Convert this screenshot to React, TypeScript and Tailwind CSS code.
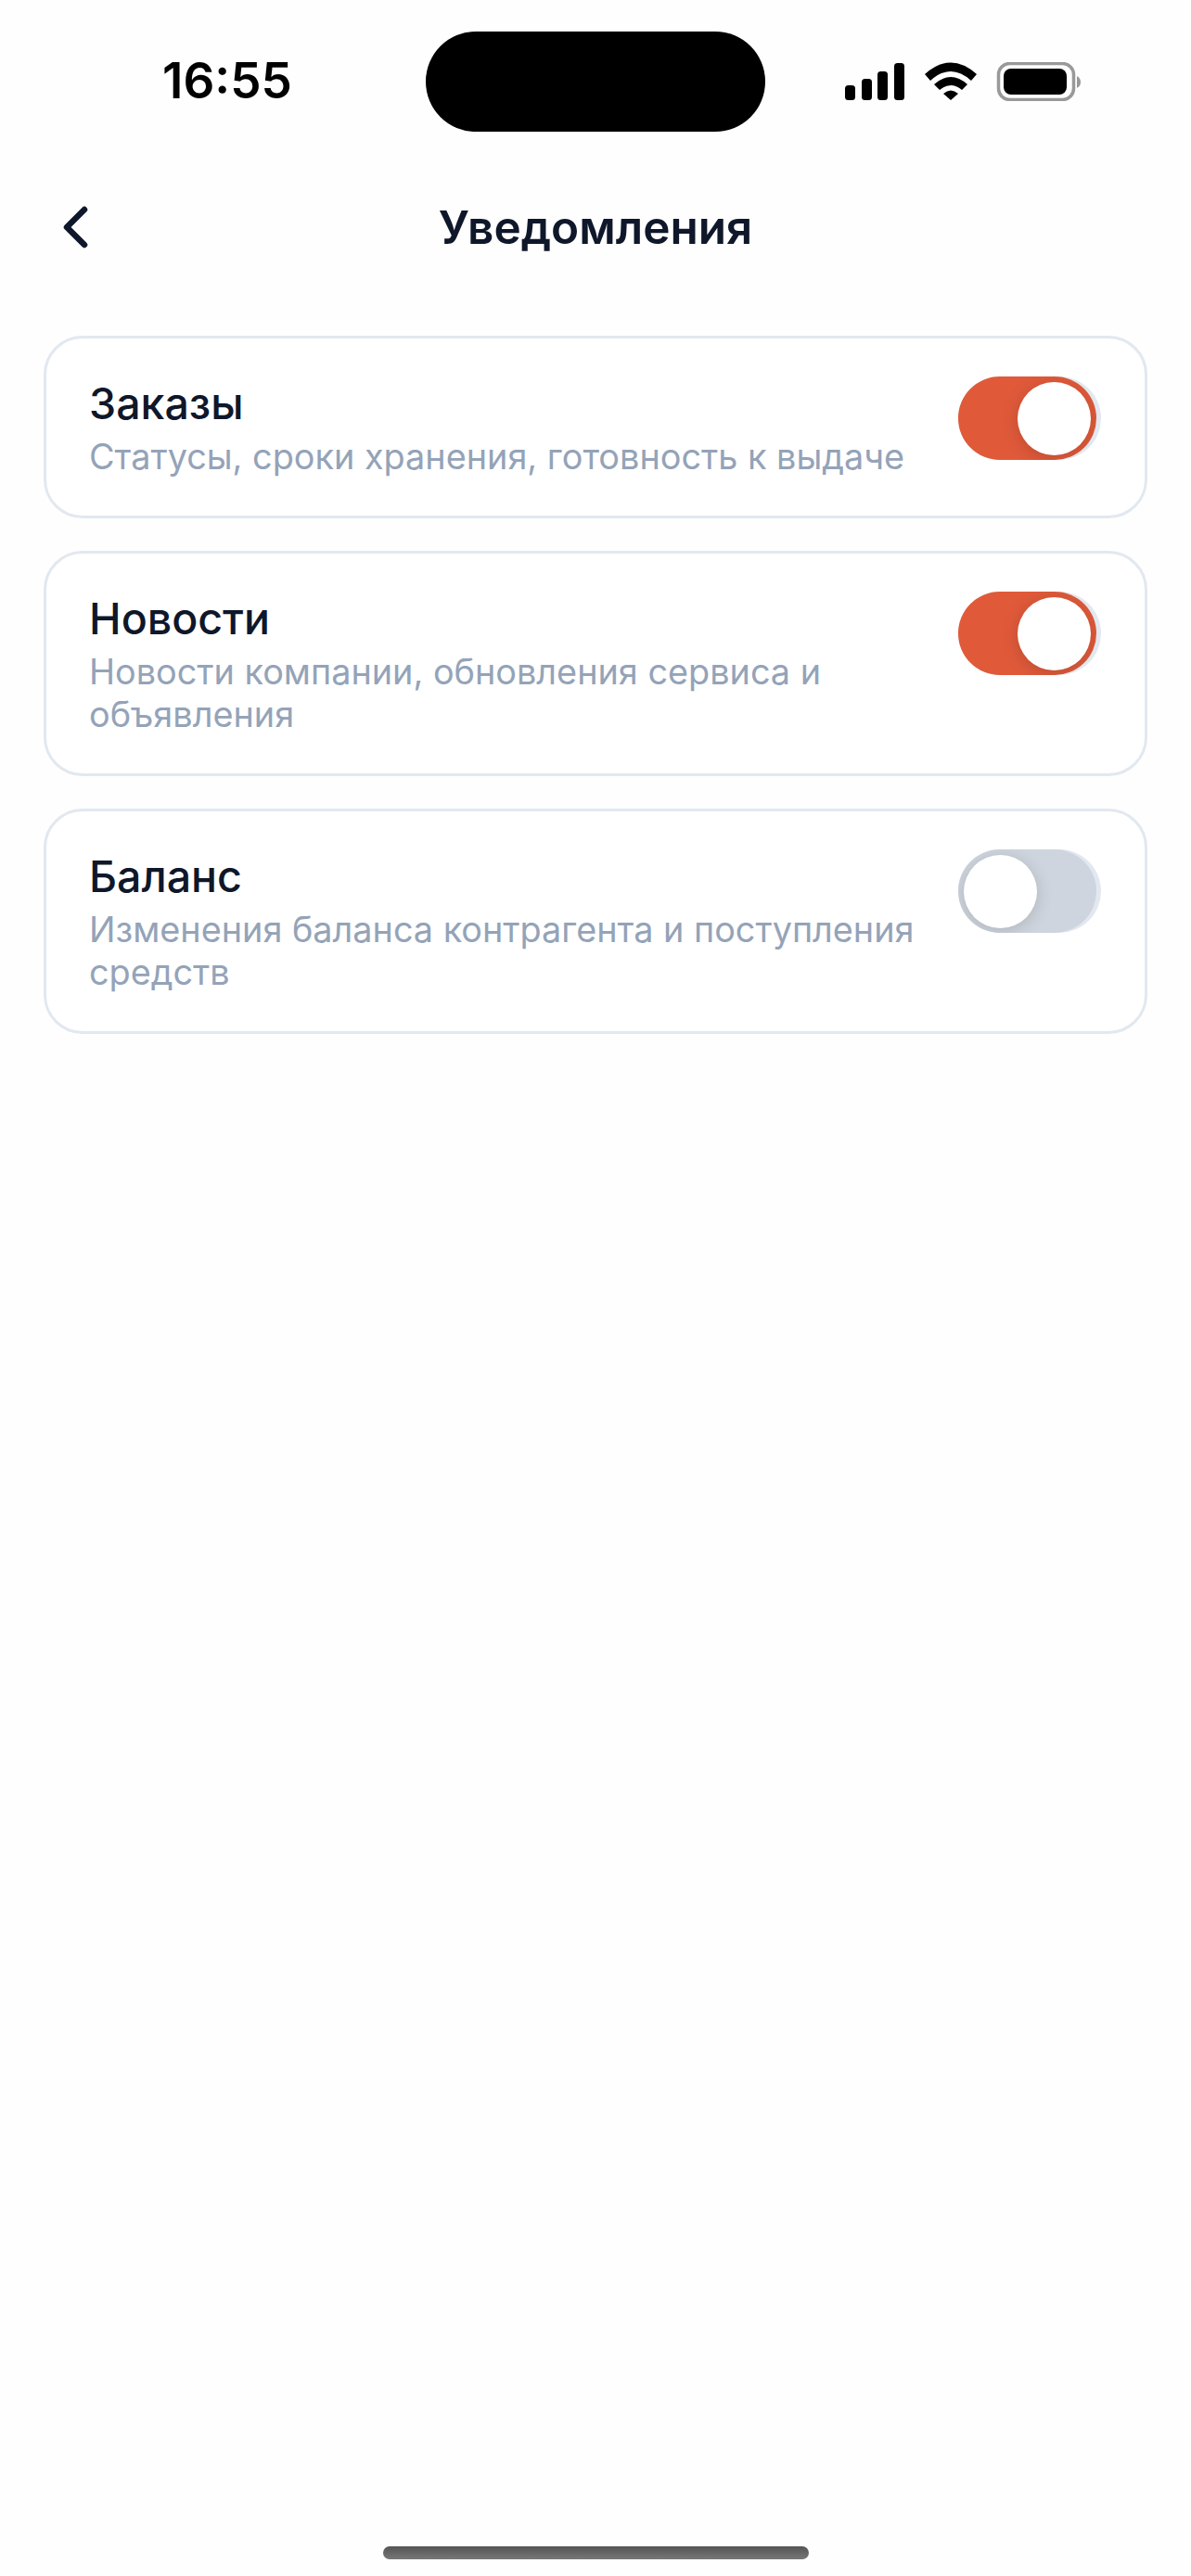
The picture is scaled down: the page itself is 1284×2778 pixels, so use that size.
function Toggle({ on }: { on: boolean }) {
  return (
    <div className="w-[154px] h-[90px] shrink-0 rounded-full bg-[#e2e8f0]">
      {on ? (
        <div className="w-[149px] h-[90px] rounded-full overflow-hidden bg-[#e05a3a] flex items-center justify-end pr-[6px]">
          <div className="w-[79px] h-[79px] rounded-full bg-white shadow-[0_3px_18px_rgba(0,0,0,0.16)]" />
        </div>
      ) : (
        <div className="w-[149px] h-[90px] rounded-full overflow-hidden bg-[#cfd5de] flex items-center justify-start pl-[6px]">
          <div className="w-[79px] h-[79px] rounded-full bg-white shadow-[0_3px_18px_rgba(0,0,0,0.16)]" />
        </div>
      )}
    </div>
  );
}

function Card({ title, text, on }: { title: string; text: string; on: boolean }) {
  return (
    <div className="rounded-[42px] border-[3px] border-[#e2e8f0] bg-white pl-[46px] pr-[47px] pt-[41px] pb-[41px] flex items-start justify-between gap-[24px]">
      <div className="flex flex-col min-w-0 flex-1">
        <div className="text-[46.500px] leading-[56px] font-medium text-[#0f172a] mt-[1px]">{title}</div>
        <div className="text-[37.800px] leading-[46px] text-[#94a3b8] mt-[6px]">{text}</div>
      </div>
      <Toggle on={on} />
    </div>
  );
}

export default function App() {
  return (
    <div className="w-[1284px] h-[2778px] bg-[#fefefe] flex flex-col font-['Inter','Liberation_Sans',sans-serif]">
      <div className="h-[142px] shrink-0 flex items-start pt-[34px] pl-[175px]">
        <div className="w-[284px] h-[108px] flex items-center text-[53px] font-semibold text-black">16:55</div>
        <div className="w-[366px] h-[108px] rounded-[54px] bg-black" />
        <svg className="ml-[86px] mt-[33px]" width="256" height="42" viewBox="911 67 256 42">
          <rect x="911" y="92" width="11" height="16" rx="3.5" fill="#000" />
          <rect x="929" y="85" width="11" height="23" rx="3.5" fill="#000" />
          <rect x="946" y="77" width="11" height="31" rx="3.5" fill="#000" />
          <rect x="964" y="68" width="11" height="40" rx="3.5" fill="#000" />
          <path d="M997 80 Q1025 55 1053 80 L1047 87 Q1025 67 1003 87 Z" fill="#000" />
          <path d="M1007 91 Q1025 75 1043 91 L1037 97 Q1025 87 1013 97 Z" fill="#000" />
          <path d="M1017 101 Q1025 94 1033 101 L1025 108 Z" fill="#000" />
          <rect x="1076.5" y="68.5" width="81" height="39" rx="12" fill="none" stroke="#999" strokeWidth="3.5" />
          <rect x="1082" y="74" width="68" height="28" rx="8" fill="#000" />
          <path d="M1161 82 Q1165 84 1165 88.500 Q1165 93 1161 95 Z" fill="#999" />
        </svg>
      </div>

      <div className="h-[206px] shrink-0 grid grid-cols-[1fr_auto_1fr] items-center">
        <div className="pl-[66px] flex items-center">
          <svg width="30" height="48" viewBox="0 0 30 48" fill="none">
            <path d="M25 5 L6 24 L25 43" stroke="#0f172a" strokeWidth="6.5" strokeLinecap="round" strokeLinejoin="round" />
          </svg>
        </div>
        <div className="text-[49.500px] leading-[56px] font-semibold text-[#0f172a]">Уведомления</div>
        <div />
      </div>

      <div className="mt-[14px] mx-[47px] flex flex-col gap-[35px]">
        <Card title="Заказы" text="Статусы, сроки хранения, готовность к выдаче" on />
        <Card title="Новости" text="Новости компании, обновления сервиса и объявления" on />
        <Card title="Баланс" text="Изменения баланса контрагента и поступления средств" on={false} />
      </div>

      <div className="mt-auto mb-[18px] self-center w-[459px] h-[14px] rounded-full bg-gradient-to-b from-[#555555] to-[#777777]" />
    </div>
  );
}
